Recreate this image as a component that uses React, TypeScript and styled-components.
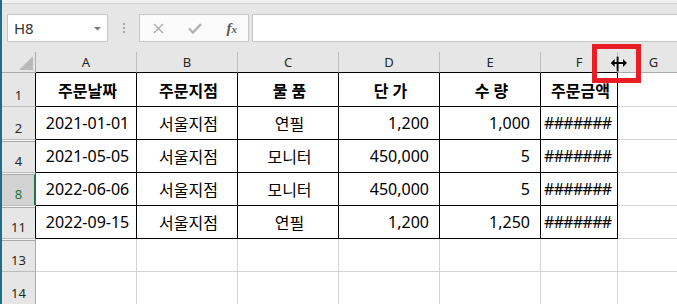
import styled, { createGlobalStyle } from "styled-components";

const GlobalStyle = createGlobalStyle`
  html, body {
    margin: 0;
    padding: 0;
    background: #ffffff;
    overflow: hidden;
  }
  * {
    box-sizing: border-box;
  }
`;

type Align = "left" | "center" | "right";

interface RowData {
  num: string;
  cells: string[];
  hiddenAbove?: boolean;
  selected?: boolean;
  title?: boolean;
}

const columns = ["A", "B", "C", "D", "E", "F", "G"];
const dataAlign: Align[] = ["center", "center", "center", "right", "right", "left"];

const rows: RowData[] = [
  { num: "1", title: true, cells: ["주문날짜", "주문지점", "물 품", "단 가", "수 량", "주문금액"] },
  { num: "2", cells: ["2021-01-01", "서울지점", "연필", "1,200", "1,000", "#######"] },
  { num: "4", hiddenAbove: true, cells: ["2021-05-05", "서울지점", "모니터", "450,000", "5", "#######"] },
  { num: "8", hiddenAbove: true, selected: true, cells: ["2022-06-06", "서울지점", "모니터", "450,000", "5", "#######"] },
  { num: "11", hiddenAbove: true, cells: ["2022-09-15", "서울지점", "연필", "1,200", "1,250", "#######"] },
  { num: "13", hiddenAbove: true, cells: [] },
  { num: "14", cells: [] },
];

const App = () => {
  return (
    <Window>
      <GlobalStyle />
      <TopStrip />
      <Toolbar>
        <NameBox>
          <span>H8</span>
          <DropArrow width="7" height="4" viewBox="0 0 7 4">
            <polygon points="0,0 7,0 3.5,3.5" fill="#7a7a7a" />
          </DropArrow>
        </NameBox>
        <Grip>
          <i />
          <i />
          <i />
        </Grip>
        <FormulaButtons>
          <svg width="11" height="11" viewBox="0 0 11 11">
            <path d="M1 1 L10 10 M10 1 L1 10" stroke="#ababab" strokeWidth="1.4" fill="none" />
          </svg>
          <svg width="14" height="11" viewBox="0 0 14 11">
            <path d="M1 5.5 L5 9.5 L13 1.2" stroke="#b3b3b3" strokeWidth="2.4" fill="none" />
          </svg>
          <Fx>
            <i>f</i>
            <small>x</small>
          </Fx>
        </FormulaButtons>
        <FormulaInput />
      </Toolbar>

      <Sheet>
        <Corner>
          <svg width="14" height="14" viewBox="0 0 14 14">
            <polygon points="14,0 14,14 0,14" fill="#b9b9b9" />
          </svg>
        </Corner>
        {columns.map((c, i) => (
          <ColHeader key={c} $edge={i < 6}>
            {c}
          </ColHeader>
        ))}

        {rows.map((row) => {
          const inTable = row.cells.length > 0;
          return [
            <RowHeader
              key={`h${row.num}`}
              $hiddenAbove={row.hiddenAbove}
              $selected={row.selected}
              $edge={inTable}
            >
              {row.num}
            </RowHeader>,
            ...columns.map((c, i) => {
              const table = inTable && i < 6;
              const text = row.cells[i] || "";
              const align: Align = row.title ? "center" : dataAlign[i] || "left";
              return (
                <Cell
                  key={`${row.num}${c}`}
                  $align={align}
                  $table={table}
                  $bold={row.title}
                  $overflow={text.startsWith("#")}
                >
                  {text}
                </Cell>
              );
            }),
          ];
        })}
      </Sheet>

      <ResizeMark />
      <ResizeCursor width="22" height="19" viewBox="0 0 22 19">
        <path
          d="M2.7 8 L6.7 4 V7 H8.6 V1.5 H10.6 V7 H15 V4 L19 8 L15 12 V9 H10.6 V16.5 H8.6 V9 H6.7 V12 Z"
          fill="#000"
          stroke="#fff"
          strokeWidth="1"
          strokeLinejoin="round"
          paintOrder="stroke"
        />
      </ResizeCursor>
    </Window>
  );
};

export default App;

// window frame
const Window = styled.div`
  position: relative;
  width: 677px;
  height: 304px;
  overflow: hidden;
  border-left: 2px solid #1f6f84;
  background: #ffffff;
  font-family: "Noto Sans", "Noto Sans CJK KR", sans-serif;
`;

const TopStrip = styled.div`
  height: 4px;
  background: #f1f1f1;
  border-bottom: 1px solid #d2d2d2;
`;

// formula bar area
const Toolbar = styled.div`
  display: flex;
  align-items: center;
  height: 48px;
  padding: 10px 0 10px 5px;
  background: #e6e6e6;
`;

const NameBox = styled.div`
  display: flex;
  align-items: center;
  justify-content: space-between;
  width: 101px;
  height: 28px;
  padding: 0 6px 0 6px;
  background: #ffffff;
  border: 1px solid #c6c6c6;
  font-size: 15px;
  color: #333333;
`;

const DropArrow = styled.svg`
  margin-top: 1px;
`;

const Grip = styled.div`
  display: flex;
  flex-direction: column;
  align-items: center;
  gap: 2px;
  width: 31px;
  i {
    width: 2px;
    height: 2px;
    background: #a6a6a6;
  }
`;

const FormulaButtons = styled.div`
  display: flex;
  align-items: center;
  justify-content: space-between;
  width: 110px;
  height: 28px;
  padding: 0 11px 0 13px;
  background: #fbfbfb;
  border: 1px solid #c6c6c6;
`;

const Fx = styled.span`
  font-family: "Liberation Serif", serif;
  font-style: italic;
  color: #595959;
  font-size: 15px;
  line-height: 1;
  i {
    font-weight: 700;
  }
  small {
    font-size: 11px;
    font-weight: 700;
  }
`;

const FormulaInput = styled.div`
  flex: 1;
  height: 28px;
  margin-left: 3px;
  margin-right: -10px;
  background: #ffffff;
  border: 1px solid #c6c6c6;
`;

// worksheet grid
const Sheet = styled.div`
  display: grid;
  grid-template-columns: 34px repeat(5, 101px) 77px 72px;
  grid-template-rows: 21px 34px repeat(6, 33px);
`;

const Corner = styled.div`
  display: flex;
  align-items: flex-end;
  justify-content: flex-end;
  padding: 0 2px 2px 0;
  background: #e6e6e6;
  border-right: 1px solid #ababab;
  border-bottom: 1px solid #ababab;
`;

const ColHeader = styled.div<{ $edge?: boolean }>`
  display: flex;
  align-items: center;
  justify-content: center;
  background: #e6e6e6;
  border-right: 1px solid #bdbdbd;
  border-bottom: 1px solid ${(p) => (p.$edge ? "#000000" : "#ababab")};
  font-size: 13px;
  color: #262626;
`;

const RowHeader = styled.div<{ $hiddenAbove?: boolean; $selected?: boolean; $edge?: boolean }>`
  display: flex;
  align-items: flex-end;
  justify-content: center;
  padding-bottom: 4px;
  line-height: 1;
  font-size: 13px;
  background: ${(p) => (p.$selected ? "#d2d2d2" : "#e6e6e6")};
  color: ${(p) => (p.$selected ? "#217346" : "#262626")};
  border-bottom: 1px solid #bdbdbd;
  border-right: 1px solid
    ${(p) => (p.$selected ? "#217346" : p.$edge ? "#000000" : "#ababab")};
  box-shadow: ${(p) =>
    [
      p.$hiddenAbove ? "inset 0 1px 0 #f4f4f4, inset 0 2px 0 #a9a9a9" : "",
      p.$selected ? "inset -1px 0 0 #217346" : "",
    ]
      .filter(Boolean)
      .join(", ") || "none"};
`;

const Cell = styled.div<{ $align: Align; $table?: boolean; $bold?: boolean; $overflow?: boolean }>`
  display: flex;
  align-items: center;
  justify-content: ${(p) =>
    p.$align === "left" ? "flex-start" : p.$align === "right" ? "flex-end" : "center"};
  padding: ${(p) => (p.$align === "right" ? "0 10px 0 0" : "0 0 0 3px")};
  border-right: 1px solid ${(p) => (p.$table ? "#000000" : "#d4d4d4")};
  border-bottom: 1px solid ${(p) => (p.$table ? "#000000" : "#d4d4d4")};
  font-size: 16px;
  font-weight: ${(p) => (p.$bold ? 700 : 400)};
  letter-spacing: ${(p) => (p.$overflow ? "-0.7px" : "0")};
  color: #000000;
  white-space: nowrap;
  overflow: hidden;
`;

// annotation over the F/G column boundary
const ResizeMark = styled.div`
  position: absolute;
  left: 590px;
  top: 44px;
  width: 49px;
  height: 39px;
  border: 5px solid #ea1d25;
`;

const ResizeCursor = styled.svg`
  position: absolute;
  left: 606px;
  top: 55px;
`;
